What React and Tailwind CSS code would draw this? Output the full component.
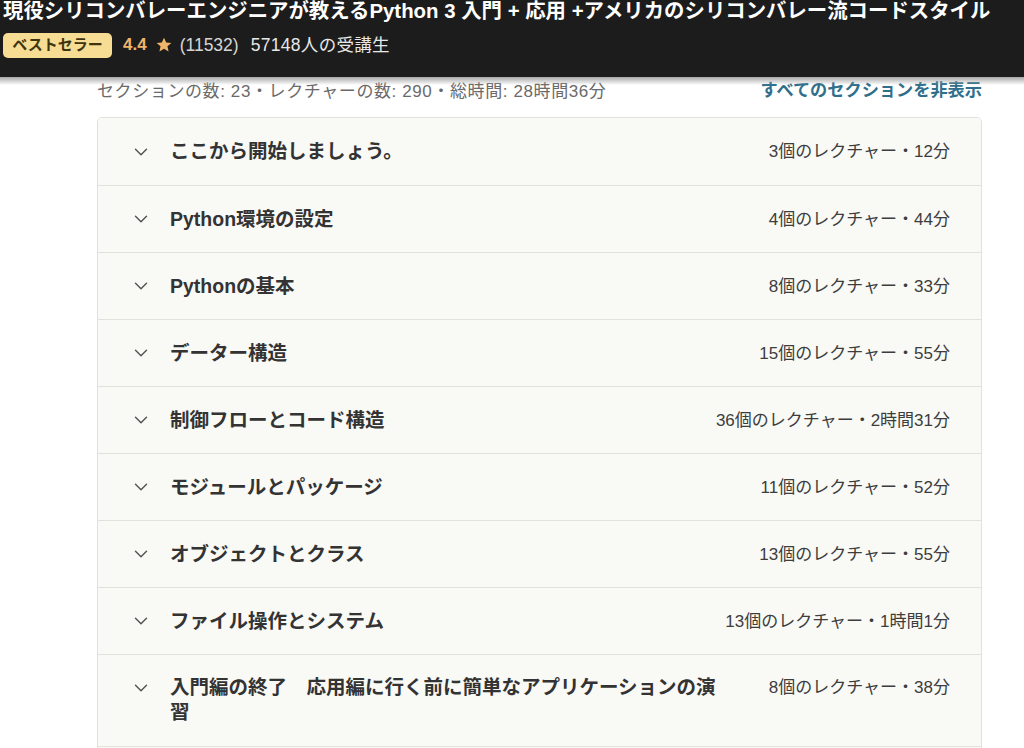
import { ChevronDown } from 'lucide-react';

const sections = [
  { title: 'ここから開始しましょう。', meta: '3個のレクチャー・12分' },
  { title: 'Python環境の設定', meta: '4個のレクチャー・44分' },
  { title: 'Pythonの基本', meta: '8個のレクチャー・33分' },
  { title: 'データー構造', meta: '15個のレクチャー・55分' },
  { title: '制御フローとコード構造', meta: '36個のレクチャー・2時間31分' },
  { title: 'モジュールとパッケージ', meta: '11個のレクチャー・52分' },
  { title: 'オブジェクトとクラス', meta: '13個のレクチャー・55分' },
  { title: 'ファイル操作とシステム', meta: '13個のレクチャー・1時間1分' },
  { title: '入門編の終了　応用編に行く前に簡単なアプリケーションの演習', meta: '8個のレクチャー・38分', tall: true },
];

export default function App() {
  return (
    <div
      className="w-[1024px] h-[748px] overflow-hidden bg-white"
      style={{ fontFamily: '"Liberation Sans", "Noto Sans CJK JP", sans-serif' }}
    >
      <div className="h-[77px] bg-[#1c1c1c] pl-[3px] relative">
        <h1 className="text-[20.4px] leading-[23px] font-bold text-white whitespace-nowrap">
          現役シリコンバレーエンジニアが教えるPython 3 入門 + 応用 +アメリカのシリコンバレー流コードスタイル
        </h1>
        <div className="flex items-center mt-[9px]">
          <span className="h-[25px] w-[109px] justify-center flex items-center rounded-[5px] bg-[#f7dc94] text-[#3e3410] text-[15px] font-bold">
            ベストセラー
          </span>
          <span className="ml-[11px] text-[17px] font-bold text-[#f0b46a]">4.4</span>
          <svg className="ml-[8px] w-[18px] h-[18px]" viewBox="0 0 24 24">
            <path
              fill="#f0b46a"
              d="M12 2.2l2.9 6.3 6.9.7-5.2 4.6 1.5 6.8L12 17.1 5.9 20.6l1.5-6.8L2.2 9.2l6.9-.7z"
            />
          </svg>
          <span className="ml-[7px] text-[17.5px] text-[#d6d6d6]">(11532)</span>
          <span className="ml-[12px] text-[17.5px] tracking-[0.3px] text-[#e8e8e8]">57148人の受講生</span>
        </div>
        <div className="absolute left-0 right-0 top-[77px] h-[8px] bg-gradient-to-b from-[#a8a8a8] to-white/0" />
      </div>

      <div className="ml-[97px] w-[885px]">
        <div className="flex items-center justify-between h-[28px]">
          <span className="text-[17px] tracking-[0.6px] text-[#6a6a6a] pt-[2px]">
            セクションの数: 23・レクチャーの数: 290・総時間: 28時間36分
          </span>
          <button className="text-[17.2px] font-bold text-[#2f6f8c]">
            すべてのセクションを非表示
          </button>
        </div>

        <div className="mt-[12px] border border-[#e2e2dc] rounded-t-[5px] overflow-hidden">
          {sections.map((s, i) => (
            <div
              key={i}
              className={`flex justify-between gap-[20px] bg-[#f9f9f5] pl-[32px] pr-[31px] ${
                i > 0 ? 'border-t border-[#e2e2dc]' : ''
              } ${s.tall ? 'items-start pt-[20px] pb-[21px]' : 'items-center h-[67px]'}`}
            >
              <div className={`flex flex-1 min-w-0 ${s.tall ? 'items-start' : 'items-center'}`}>
                <ChevronDown
                  className={`w-[22px] h-[22px] shrink-0 text-[#555] ${s.tall ? 'mt-[2px]' : ''}`}
                  strokeWidth={1.6}
                />
                <span className="ml-[18px] max-w-[555px] text-[19.5px] leading-[25px] font-bold text-[#333]">
                  {s.title}
                </span>
              </div>
              <span className="shrink-0 text-[17px] leading-[25px] text-[#3d3d3d] whitespace-nowrap">{s.meta}</span>
            </div>
          ))}
          <div className="h-[20px] bg-[#f9f9f5] border-t border-[#e2e2dc]" />
        </div>
      </div>
    </div>
  );
}
